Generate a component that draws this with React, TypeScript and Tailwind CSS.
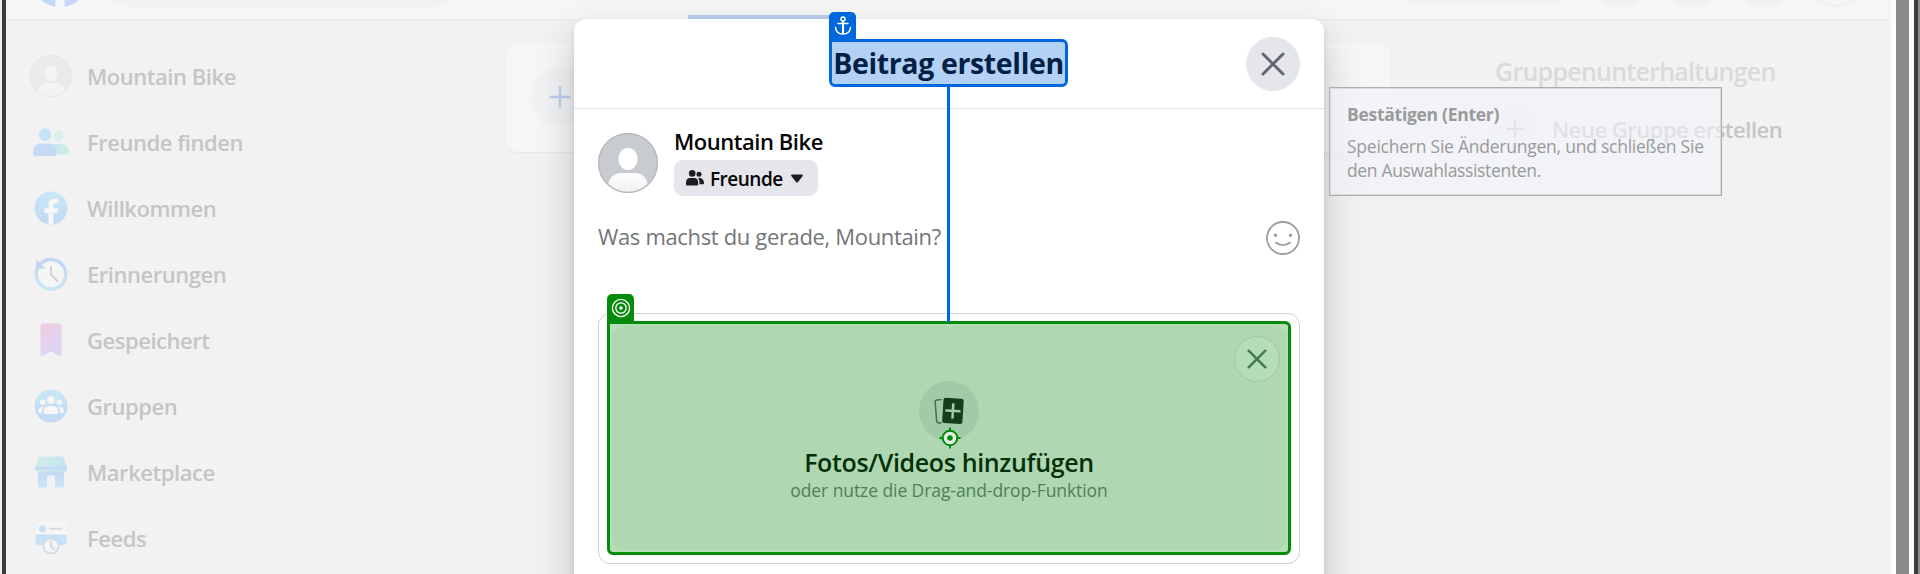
import type { ReactNode } from 'react';

function Avatar({ className, id }: { className: string; id: string }) {
  return (
    <svg viewBox="0 0 60 60" className={className}>
      <defs>
        <clipPath id={id}>
          <circle cx="30" cy="30" r="29.5" />
        </clipPath>
        <linearGradient id={`${id}-body`} x1="0" y1="0" x2="0" y2="1">
          <stop offset="0" stopColor="#ffffff" />
          <stop offset="1" stopColor="#ebecef" />
        </linearGradient>
      </defs>
      <circle cx="30" cy="30" r="30" fill="#c8ccd1" />
      <ellipse cx="30" cy="26" rx="9.7" ry="11" fill="#fff" />
      <path
        clipPath={`url(#${id})`}
        d="M10 53c1-8 6-13 13-13h14c7 0 12 5 13 13l-6 12H16z"
        fill={`url(#${id}-body)`}
      />
      <circle cx="30" cy="30" r="29.4" fill="none" stroke="#b4b8bc" strokeWidth="1.2" />
    </svg>
  );
}

function FriendsIcon() {
  return (
    <svg viewBox="0 0 36 36" className="size-9">
      <ellipse cx="25.8" cy="11.8" rx="4.9" ry="5.6" fill="#d9efea" />
      <path d="M18 20h10c5 0 8 3.500 8 8 0 1.500-1 2.500-2.500 2.500H18z" fill="#cdece5" />
      <circle cx="12" cy="10.600" r="6.300" fill="#c5e4f6" />
      <path d="M8 19.500h8c5 0 8 3.500 8 9 0 2-1 3.500-3 3.500H3c-2 0-3-1.500-3-3.500 0-5.500 3-9 8-9z" fill="#c5daf4" />
    </svg>
  );
}

function BlueGradient({ id }: { id: string }) {
  return (
    <defs>
      <linearGradient id={id} x1="0" y1="0" x2="0" y2="1">
        <stop offset="0" stopColor="#c8e8f6" />
        <stop offset="1" stopColor="#c3d7f3" />
      </linearGradient>
    </defs>
  );
}

function WelcomeIcon() {
  return (
    <svg viewBox="0 0 36 36" className="size-9">
      <BlueGradient id="welcome" />
      <circle cx="18" cy="18" r="16.500" fill="url(#welcome)" />
      <path
        d="M15.500 34.300V23h-4.200v-4.700h4.200v-3.400c0-4 2.400-6.300 6-6.300 1.500 0 3 .2 3.700.4v4h-2.400c-1.900 0-2.400 1-2.400 2.300v3h4.600l-.8 4.700h-3.800v11.300z"
        fill="#f6f6f6"
      />
    </svg>
  );
}

function MemoriesIcon() {
  return (
    <svg viewBox="0 0 36 36" className="size-9" fill="none">
      <defs>
        <linearGradient id="memories" x1="0" y1="0" x2="0" y2="1">
          <stop offset="0" stopColor="#c3d5f1" />
          <stop offset="1" stopColor="#c8e6f6" />
        </linearGradient>
      </defs>
      <circle cx="18" cy="18" r="14.700" fill="#f5f5f5" />
      <path d="M7.600 7.900A14.700 14.700 0 1 1 3.300 18c0-2.200.5-4.200 1.300-6" stroke="url(#memories)" strokeWidth="3.400" />
      <path d="M3 3l9.500 9.500H3z" fill="#c3d5f1" />
      <path d="M18 11v7.500l6.500 6.500" stroke="#d5d6d6" strokeWidth="2.200" strokeLinecap="round" />
    </svg>
  );
}

function SavedIcon() {
  return (
    <svg viewBox="0 0 36 36" className="size-9">
      <defs>
        <linearGradient id="saved" x1="0" y1="0" x2=".3" y2="1">
          <stop offset="0" stopColor="#f1cbe2" />
          <stop offset="1" stopColor="#dcd6f5" />
        </linearGradient>
      </defs>
      <path d="M7.500 4a2.500 2.500 0 0 1 2.500-2.500h16A2.500 2.500 0 0 1 28.500 4v29.500c0 1-.8 1.200-1.500.7L18 29.500l-9 4.700c-.7.5-1.500.3-1.500-.7z" fill="url(#saved)" />
    </svg>
  );
}

function GroupsIcon() {
  return (
    <svg viewBox="0 0 36 36" className="size-9">
      <BlueGradient id="groups" />
      <circle cx="18" cy="18" r="16.500" fill="url(#groups)" />
      <g fill="#f6f6f6">
        <circle cx="18" cy="12" r="3.900" />
        <circle cx="9.800" cy="14.300" r="2.700" />
        <circle cx="26.200" cy="14.300" r="2.700" />
        <path d="M15.500 18h5c3 0 4.800 2.800 4.800 6 0 1.500-.8 2-2 2H12.700c-1.200 0-2-.5-2-2 0-3.200 1.800-6 4.800-6z" />
        <path d="M9.800 18.800c-3 .3-4.600 2.200-4.600 4.600 0 1 .6 1.600 1.600 1.600h2c0-2.500.4-4.300 1.900-6.100z" />
        <path d="M26.200 18.800c3 .3 4.600 2.200 4.600 4.600 0 1-.6 1.600-1.600 1.600h-2c0-2.500-.4-4.300-1.900-6.100z" />
      </g>
    </svg>
  );
}

function MarketplaceIcon() {
  return (
    <svg viewBox="0 0 36 36" className="size-9">
      <defs>
        <linearGradient id="market" x1="0" y1="0" x2="0" y2="1">
          <stop offset="0" stopColor="#c5d6f2" />
          <stop offset="1" stopColor="#c8e7f6" />
        </linearGradient>
        <linearGradient id="awning" x1="0" y1="0" x2="1" y2="0">
          <stop offset="0" stopColor="#d2ede6" />
          <stop offset="1" stopColor="#c5e2f3" />
        </linearGradient>
      </defs>
      <path d="M5 16h26v15.500a2 2 0 0 1-2 2h-7V23c0-1-.5-1.500-1.500-1.500h-5c-1 0-1.500.5-1.500 1.500v10.500H7a2 2 0 0 1-2-2z" fill="url(#market)" />
      <path d="M7.500 2.500h21c1 0 1.700.5 2 1.400L34 13v3c-1 3-5 3-6.500.8-1.500 2.200-5 2.200-6.400 0-1.500 2.200-4.700 2.200-6.200 0-1.400 2.200-4.900 2.200-6.400 0C7 19 3 19 2 16v-3l3.500-9.100c.3-.9 1-1.400 2-1.400z" fill="url(#awning)" />
      <path d="M2 13h32v2.800H2z" fill="#c3dcf2" />
    </svg>
  );
}

function FeedsIcon() {
  return (
    <svg viewBox="0 0 36 36" className="size-9">
      <path d="M2.500 15V6.500A4 4 0 0 1 6.500 2.500h23a4 4 0 0 1 4 4V15z" fill="#f6f6f6" />
      <path d="M2.500 14.500h31V21a4 4 0 0 1-4 4h-23a4 4 0 0 1-4-4z" fill="#c6e0f5" />
      <circle cx="9.500" cy="8.800" r="3.500" fill="#c5e0f6" />
      <path d="M17 8.800h11.500" stroke="#dcdede" strokeWidth="2.300" strokeLinecap="round" />
      <circle cx="18" cy="26" r="7.600" fill="#f5f5f5" stroke="#ccd9e6" strokeWidth="1.500" />
      <path d="M18 21.500v4.800l2.900 3" fill="none" stroke="#d5d6d6" strokeWidth="1.900" strokeLinecap="round" />
    </svg>
  );
}

function Cross({ className }: { className: string }) {
  return (
    <svg viewBox="0 0 24 24" className={className} fill="none" stroke="currentColor" strokeLinecap="round">
      <path d="M2 2l20 20M22 2L2 22" />
    </svg>
  );
}

function Plus({ className }: { className: string }) {
  return (
    <svg viewBox="0 0 22 22" className={className} fill="none" stroke="currentColor" strokeLinecap="round">
      <path d="M11 1.500v19M1.500 11h19" />
    </svg>
  );
}

const menu: { label: string; icon: ReactNode }[] = [
  { label: 'Mountain Bike', icon: <Avatar id="side-avatar" className="size-[42px] opacity-20" /> },
  { label: 'Freunde finden', icon: <FriendsIcon /> },
  { label: 'Willkommen', icon: <WelcomeIcon /> },
  { label: 'Erinnerungen', icon: <MemoriesIcon /> },
  { label: 'Gespeichert', icon: <SavedIcon /> },
  { label: 'Gruppen', icon: <GroupsIcon /> },
  { label: 'Marketplace', icon: <MarketplaceIcon /> },
  { label: 'Feeds', icon: <FeedsIcon /> },
];

function TopBar() {
  return (
    <header className="flex h-[19px] shrink-0 items-end overflow-hidden bg-[#f6f6f6] pb-3 shadow-[0_1px_2px_rgba(0,0,0,0.04)]">
      <svg viewBox="0 0 60 60" className="ml-6 size-[60px] shrink-0">
        <circle cx="30" cy="30" r="30" fill="#c5d8f8" />
        <path d="M25.500 60V40h9v20z" fill="#f6f6f6" />
      </svg>
      <div className="ml-3 h-[60px] w-[360px] shrink-0 rounded-full bg-[#f2f2f2]" />
      <div className="-mb-3 ml-[226px] h-1 w-[168px] shrink-0 bg-[#bccdec]" />
      <div className="mb-[3px] ml-auto h-[52px] w-[186px] shrink-0 rounded-full bg-[#f1f1f1]" />
      <div className="ml-[14px] mr-[25px] flex shrink-0 gap-3">
        <div className="size-[60px] rounded-full bg-[#f1f1f1]" />
        <div className="size-[60px] rounded-full bg-[#f1f1f1]" />
        <div className="size-[60px] rounded-full bg-[#f1f1f1]" />
        <div className="size-[60px] rounded-full border-2 border-[#f0f0f0] bg-[#f5f5f5]" />
      </div>
    </header>
  );
}

function Sidebar() {
  return (
    <nav className="w-[500px] shrink-0 pl-[21px] pt-6">
      {menu.map(({ label, icon }) => (
        <div key={label} className="flex h-[66px] items-center gap-3">
          <div className="flex w-12 justify-center">{icon}</div>
          <span className="whitespace-nowrap pb-px text-[22px] font-semibold leading-8 tracking-[-0.46px] text-[#c5c5c5]">{label}</span>
        </div>
      ))}
    </nav>
  );
}

function Contacts() {
  return (
    <aside className="ml-auto w-[397px] shrink-0 pt-[35px]">
      <h2 className="ml-px whitespace-nowrap text-[25px] font-semibold leading-[34px] tracking-[-0.74px] text-[#d9dbda]">
        Gruppenunterhaltungen
      </h2>
      <div className="mt-2 flex h-[66px] items-center">
        <div className="flex size-[42px] items-center justify-center rounded-full bg-[#f1f1f1]">
          <Plus className="size-[18px] stroke-[2.4] text-[#c5c5c5]" />
        </div>
        <span className="ml-4 whitespace-nowrap text-[22px] font-semibold tracking-[-0.5px] text-[#c5c5c5]">
          Neue Gruppe erstellen
        </span>
      </div>
    </aside>
  );
}

function Tooltip() {
  return (
    <div className="absolute left-[1323px] top-[87px] h-[109px] w-[393px] border border-[#adaeb0] bg-[#f1f3f8]/60 pl-[17px] pt-[15px] shadow-[inset_0_0_0_1px_#d9dbdf]">
      <div className="whitespace-nowrap text-[17.5px] font-bold leading-[23px] tracking-[-0.28px] text-[#999a9c]">Bestätigen (Enter)</div>
      <p className="mt-[8px] whitespace-nowrap text-[17.5px] leading-6 tracking-[-0.24px] text-[#999a9c]">
        Speichern Sie Änderungen, und schließen Sie
        <br />
        <span className="tracking-[-0.34px]">den Auswahlassistenten.</span>
      </p>
    </div>
  );
}

function DropZone() {
  return (
    <div className="relative mx-6 mt-[58px] h-[251px] rounded-xl border border-[#cdd0d4] p-2 pt-[7px]">
      <div className="absolute left-2 top-[-20px] flex h-7 w-[27px] justify-center rounded-t-[5px] bg-[#058b0b] pt-[4px]">
        <svg viewBox="0 0 20 20" className="size-5" fill="none" stroke="#fff" strokeWidth="1.3">
          <circle cx="10" cy="10" r="8.600" />
          <circle cx="10" cy="10" r="5.200" />
          <circle cx="10" cy="10" r="1.700" fill="#fff" stroke="none" />
        </svg>
      </div>
      <div className="h-[234px] rounded-[6px] rounded-tl-none border-[3px] border-[#058b0b] bg-[#b5deb7] p-0.5">
        <div className="relative flex h-full flex-col items-center rounded-xl bg-[#afd8b2] pt-[55px]">
          <div className="absolute right-[6px] top-[10px] flex size-[46px] items-center justify-center rounded-full border border-[#9dc8a1] bg-[#b3deb6] text-[#477652]">
            <Cross className="size-5 stroke-[2.9]" />
          </div>
          <div className="relative flex size-[60px] items-center justify-center rounded-full bg-[#a1cba7]">
            <svg viewBox="0 0 30 28" className="h-[28px] w-[30px]">
              <path d="M7.500 2.500L3 2.900c-1.200.1-1.900.9-1.800 2.100l1.400 18.500c.1 1.600.9 2.500 2.400 2.400l2.600-.2" fill="none" stroke="#3f7049" strokeWidth="1.500" />
              <path d="M12 .8l15.500 1c1.500.1 2.300 1 2.200 2.500l-1.300 20.500c-.1 1.500-1 2.300-2.500 2.200l-15.500-1c-1.500-.1-2.300-1-2.200-2.500L9.500 3C9.600 1.500 10.500.7 12 .8z" fill="#153f1c" />
              <path d="M19.300 7.300l-.8 13.200M12.400 13.500l13.100.8" stroke="#a1cba7" strokeWidth="2.600" strokeLinecap="round" />
            </svg>
            <svg viewBox="0 0 22 22" className="absolute left-[20px] top-[46px] size-[22px]" fill="none" stroke="#058b0b" strokeWidth="2">
              <circle cx="11" cy="11" r="7.300" fill="#e4f3e4" />
              <path d="M11 .5v4M11 17.500v4M.5 11h4M17.500 11h4" />
              <circle cx="11" cy="11" r="2.800" fill="#058b0b" stroke="none" />
            </svg>
          </div>
          <div className="mt-[4px] whitespace-nowrap text-[25px] font-semibold leading-[34px] tracking-[-0.35px] text-[#03310a]">
            Fotos/Videos hinzufügen
          </div>
          <div className="whitespace-nowrap text-[17.5px] leading-[22px] tracking-[-0.08px] text-[#4f8057]">
            oder nutze die Drag-and-drop-Funktion
          </div>
        </div>
      </div>
    </div>
  );
}

function PostDialog() {
  return (
    <section className="absolute left-[568px] top-[19px] h-[620px] w-[750px] rounded-xl bg-white shadow-[0_18px_42px_rgba(0,0,0,0.2),0_3px_6px_rgba(0,0,0,0.1)]">
      <header className="relative flex h-[90px] justify-center border-b border-[#e2e3e5] pt-5">
        <div className="relative ml-[-1px] flex h-12 w-[239px] items-center justify-center rounded-[6px] rounded-tl-none border-[3px] border-[#0067df] bg-[#b3d1f5]">
          <div className="absolute left-[-3px] top-[-30px] flex h-[30px] w-[27px] justify-center rounded-t-[5px] bg-[#0067df] pt-1">
            <svg viewBox="0 0 18 20" className="h-5 w-[18px]" fill="none" stroke="#fff" strokeWidth="1.500" strokeLinecap="round">
              <circle cx="9" cy="3" r="2" />
              <path d="M9 5v12.500" strokeWidth="2.100" />
              <path d="M4 7.500h10M1.500 11.500C2 16 5 18 9 18s7-2 7.500-6.500" />
            </svg>
          </div>
          <h1 className="whitespace-nowrap text-[28.5px] font-bold leading-[38px] tracking-[-0.36px] text-[#021f45]">Beitrag erstellen</h1>
        </div>
        <div className="absolute right-6 top-[18px] flex size-[54px] items-center justify-center rounded-full bg-[#e4e6eb] text-[#606770]">
          <Cross className="size-6 stroke-[3]" />
        </div>
      </header>
      <div className="flex gap-4 px-6 pt-[18px]">
        <Avatar id="dialog-avatar" className="mt-[6px] size-[60px]" />
        <div>
          <div className="whitespace-nowrap text-[22px] font-semibold leading-7 tracking-[-0.46px] text-[#050505]">Mountain Bike</div>
          <div className="mt-[5px] flex h-9 w-[144px] items-center rounded-[9px] bg-[#e4e6eb] pl-3 text-[#1c1e21]">
            <svg viewBox="0 0 18 16" className="h-4 w-[18px]" fill="currentColor">
              <circle cx="6.200" cy="3.400" r="3.300" />
              <circle cx="13" cy="4.200" r="2.500" />
              <path d="M4 8h4.500c2.300 0 3.700 2 3.700 4.500V14c0 1-.4 1.600-1.500 1.600H1.500C.4 15.600 0 15 0 14v-1.500C0 10 1.500 8 4 8z" />
              <path d="M12 8.200c3-.7 6 1.400 6 4.800 0 .9-.5 1.300-1.300 1.300h-3.200v-2c0-1.700-.6-3.100-1.500-4.100z" />
            </svg>
            <span className="ml-[6px] whitespace-nowrap pt-0.5 text-[19px] font-semibold leading-7 tracking-[-0.5px] text-[#050505]">Freunde</span>
            <svg viewBox="0 0 12 9" className="ml-2 mt-px h-[9px] w-3" fill="currentColor">
              <path d="M1 .5h10c.9 0 1.200.8.700 1.600L7 8c-.6.800-1.400.800-2 0L.3 2.100C-.2 1.300.1.500 1 .500z" />
            </svg>
          </div>
        </div>
      </div>
      <div className="mt-[24px] flex justify-between px-6">
        <div className="whitespace-nowrap text-[22px] leading-8 tracking-[-0.34px] text-[#737577]">Was machst du gerade, Mountain?</div>
        <svg viewBox="0 0 34 34" className="mt-px size-[34px]" fill="none" stroke="#9a9ea4" strokeWidth="1.800" strokeLinecap="round">
          <circle cx="17" cy="17" r="16" />
          <path d="M10 21.500c3.700 3.400 10.300 3.400 14 0" />
          <path d="M9.500 14.200h.01M24.500 14.200h.01" strokeWidth="3.600" />
        </svg>
      </div>
      <DropZone />
      <div className="absolute left-[373px] top-[68px] h-[235px] w-[3px] bg-[#0067df]" />
    </section>
  );
}

export default function App() {
  return (
    <div className="flex h-[574px] w-full overflow-hidden bg-[#f2f2f2] font-['Open_Sans','Noto_Sans',sans-serif]">
      <div className="w-1.5 shrink-0 border-l-2 border-[#ececec] bg-[#3a3a3a]" />
      <main className="relative flex min-w-0 flex-1 flex-col overflow-hidden">
        <TopBar />
        <div className="flex">
          <Sidebar />
          <div className="mt-6 h-[109px] w-[885px] shrink-0 rounded-xl bg-[#f6f6f6] pl-6 pt-6 shadow-[0_1px_2px_rgba(0,0,0,0.05)]">
            <div className="flex size-[60px] items-center justify-center rounded-full bg-[#f0f2f4]">
              <Plus className="size-[22px] stroke-[2.5] text-[#bdcff0]" />
            </div>
          </div>
          <Contacts />
        </div>
        <PostDialog />
        <Tooltip />
      </main>
      <div className="w-[23px] shrink-0 border-x-[5px] border-[#fcfcfc] bg-[#8a8a8a]" />
      <div className="w-1.5 shrink-0 border-r-2 border-[#8c8c8c] bg-[#3a3a3a]" />
    </div>
  );
}
